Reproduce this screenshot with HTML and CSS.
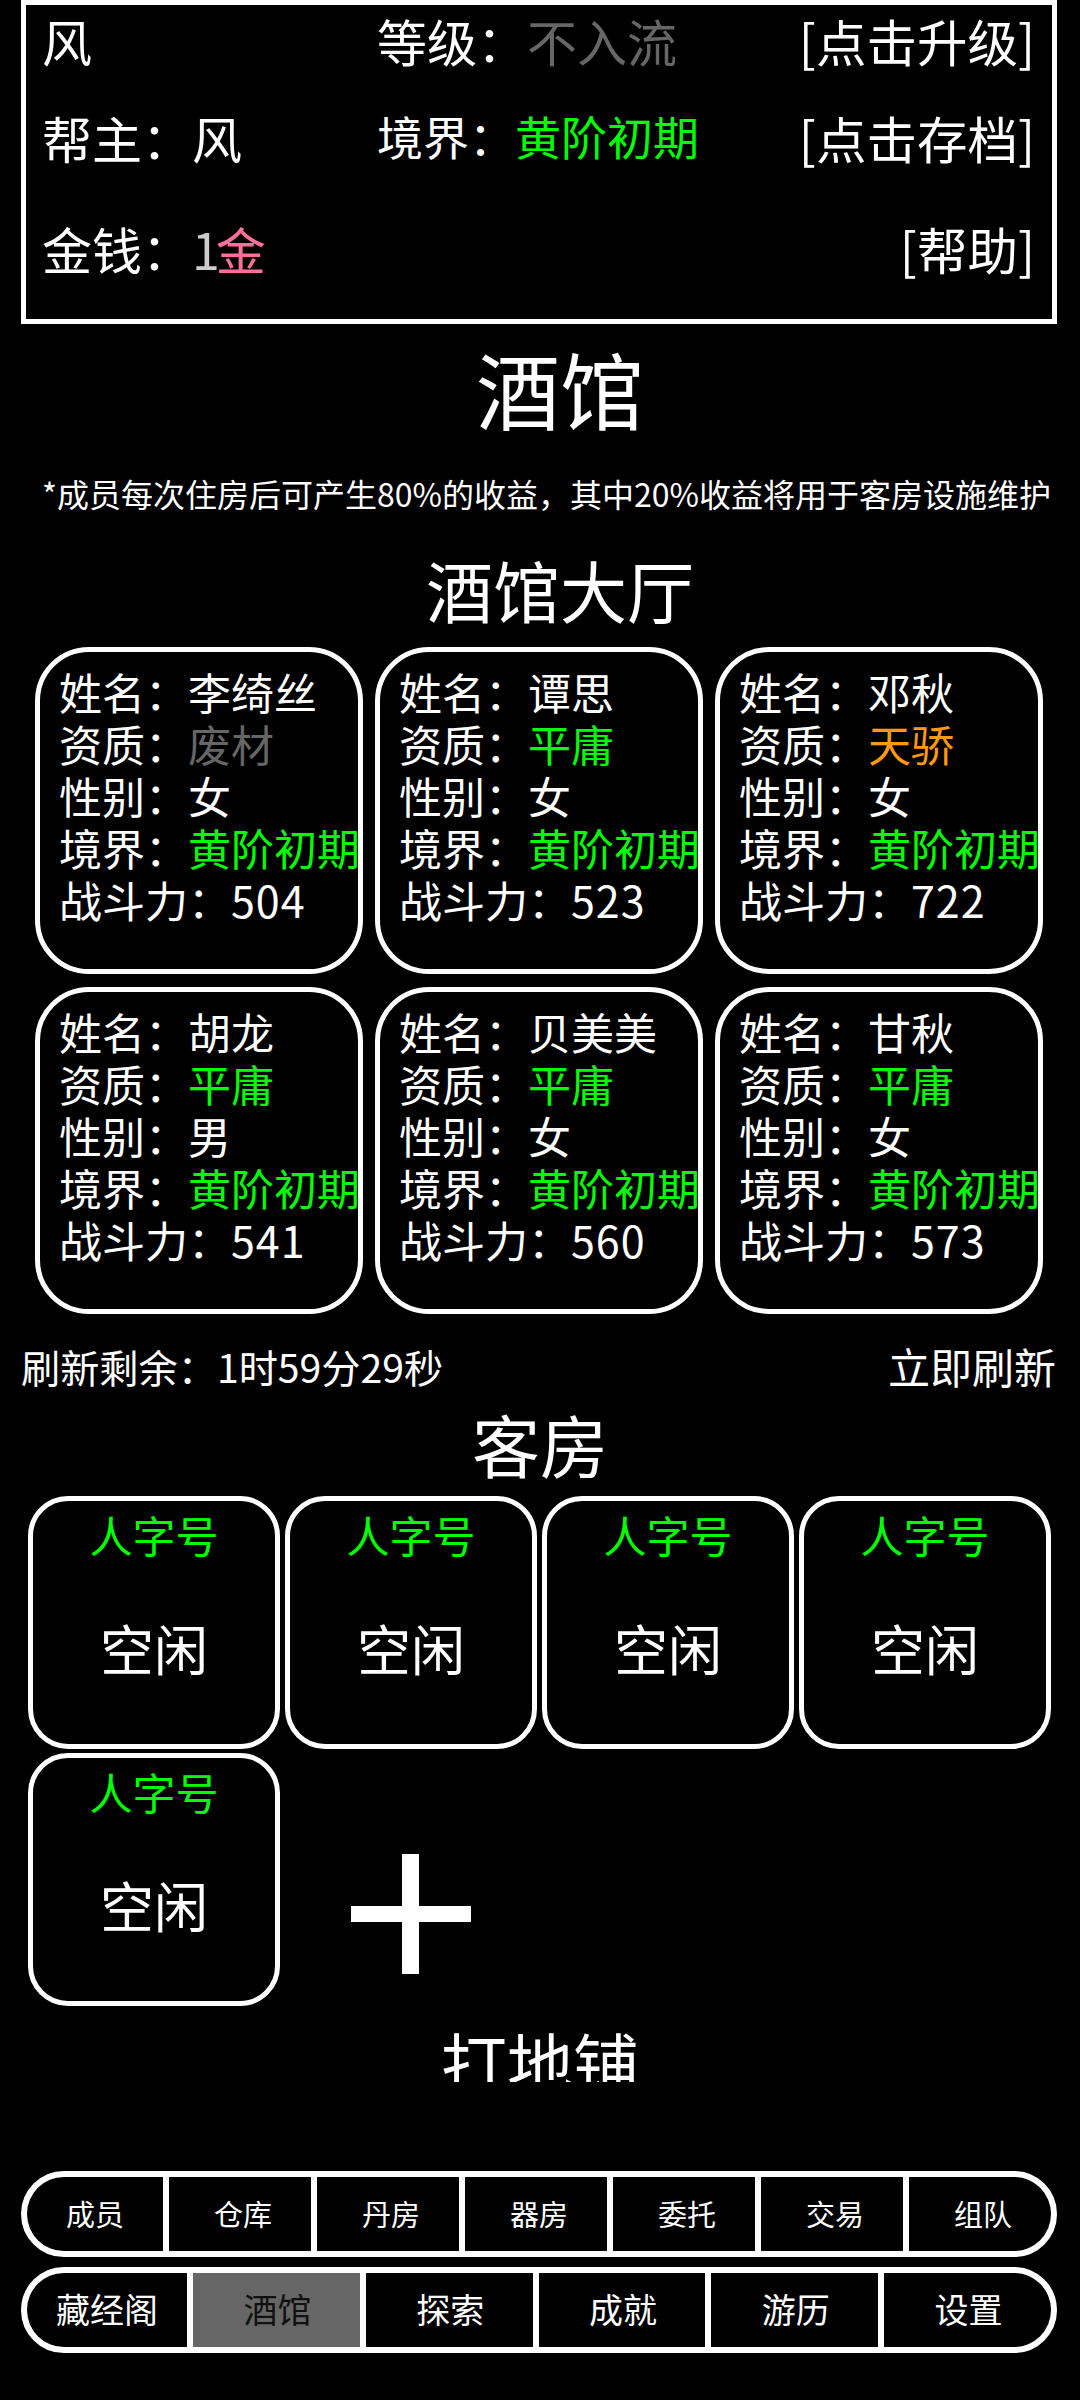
FILE: index.html
```html
<!DOCTYPE html>
<html lang="zh-CN">
<head>
<meta charset="utf-8">
<title>酒馆</title>
<link rel="stylesheet" href="styles.css">
</head>
<body>
<header class="status">
  <div class="st-item">风</div>
  <div class="st-item">等级：<span class="gray">不入流</span></div>
  <div class="st-item st-link">[点击升级]</div>
  <div class="st-item st-low">帮主：风</div>
  <div class="st-item st-realm">境界：<span class="green">黄阶初期</span></div>
  <div class="st-item st-link st-low">[点击存档]</div>
  <div class="st-item">金钱：<span class="silver">1</span><span class="pink">金</span></div>
  <div class="st-item"></div>
  <div class="st-item st-link">[帮助]</div>
</header>

<h1 class="page-title">酒馆</h1>
<p class="note">*成员每次住房后可产生80%的收益，其中20%收益将用于客房设施维护</p>
<h2 class="hall-title">酒馆大厅</h2>

<section class="cards">
  <article class="card">
    <div>姓名：李绮丝</div>
    <div>资质：<span class="gray">废材</span></div>
    <div>性别：女</div>
    <div>境界：<span class="green">黄阶初期</span></div>
    <div>战斗力：<span class="num">504</span></div>
  </article>
  <article class="card">
    <div>姓名：谭思</div>
    <div>资质：<span class="green">平庸</span></div>
    <div>性别：女</div>
    <div>境界：<span class="green">黄阶初期</span></div>
    <div>战斗力：<span class="num">523</span></div>
  </article>
  <article class="card">
    <div>姓名：邓秋</div>
    <div>资质：<span class="orange">天骄</span></div>
    <div>性别：女</div>
    <div>境界：<span class="green">黄阶初期</span></div>
    <div>战斗力：<span class="num">722</span></div>
  </article>
  <article class="card">
    <div>姓名：胡龙</div>
    <div>资质：<span class="green">平庸</span></div>
    <div>性别：男</div>
    <div>境界：<span class="green">黄阶初期</span></div>
    <div>战斗力：<span class="num">541</span></div>
  </article>
  <article class="card">
    <div>姓名：贝美美</div>
    <div>资质：<span class="green">平庸</span></div>
    <div>性别：女</div>
    <div>境界：<span class="green">黄阶初期</span></div>
    <div>战斗力：<span class="num">560</span></div>
  </article>
  <article class="card">
    <div>姓名：甘秋</div>
    <div>资质：<span class="green">平庸</span></div>
    <div>性别：女</div>
    <div>境界：<span class="green">黄阶初期</span></div>
    <div>战斗力：<span class="num">573</span></div>
  </article>
</section>

<div class="refresh">
  <span class="refresh-time">刷新剩余：1时59分29秒</span>
  <span class="refresh-now">立即刷新</span>
</div>

<h2 class="rooms-title">客房</h2>
<section class="rooms">
  <div class="room"><div class="room-name">人字号</div><div class="room-state">空闲</div></div>
  <div class="room"><div class="room-name">人字号</div><div class="room-state">空闲</div></div>
  <div class="room"><div class="room-name">人字号</div><div class="room-state">空闲</div></div>
  <div class="room"><div class="room-name">人字号</div><div class="room-state">空闲</div></div>
  <div class="room"><div class="room-name">人字号</div><div class="room-state">空闲</div></div>
  <div class="room-add">
    <svg class="plus" width="120" height="120" viewBox="0 0 120 120" aria-hidden="true">
      <path fill="#fff" d="M51 0h17v52h52v16H68v52H51V68H0V52h51z"/>
    </svg>
  </div>
</section>
<div class="floor">打地铺</div>

<nav class="nav nav-seven">
  <div class="nav-cell">成员</div>
  <div class="nav-cell">仓库</div>
  <div class="nav-cell">丹房</div>
  <div class="nav-cell">器房</div>
  <div class="nav-cell">委托</div>
  <div class="nav-cell">交易</div>
  <div class="nav-cell">组队</div>
</nav>
<nav class="nav nav-six">
  <div class="nav-cell">藏经阁</div>
  <div class="nav-cell nav-active">酒馆</div>
  <div class="nav-cell">探索</div>
  <div class="nav-cell">成就</div>
  <div class="nav-cell">游历</div>
  <div class="nav-cell">设置</div>
</nav>
</body>
</html>
```

FILE: styles.css
```css
* { box-sizing: border-box; }
html, body { margin: 0; padding: 0; }
body {
  width: 1080px;
  height: 2400px;
  overflow: hidden;
  background: #000;
  color: #fff;
  font-family: "Noto Sans CJK SC", "Noto Sans", sans-serif;
  font-weight: 400;
}
h1, h2, p { margin: 0; font-weight: 400; text-align: center; }

.green { color: #0f0; }
.gray { color: #666; }
.orange { color: #ff9a0a; }
.pink { color: #ff6f9c; }
.silver { color: #ccc; letter-spacing: -4px; }
.num { letter-spacing: 1px; }

.status {
  width: 1036px;
  height: 324px;
  margin-left: 21px;
  border: 5px solid #fff;
  padding: 0 17px 0 16px;
  display: grid;
  grid-template-columns: 335px 1fr auto;
  grid-template-rows: 70px 122px 102px;
  align-items: center;
  font-size: 50px;
  line-height: 60px;
}
.st-link { justify-self: end; font-size: 50.5px; }
.st-low { margin-top: 2px; }
.st-realm { font-size: 46px; margin-bottom: 2px; }

.page-title {
  margin: 11px 0 0 40px;
  font-size: 84px;
  line-height: 106px;
}
.note {
  margin-top: 30px;
  padding-left: 42px;
  text-align: left;
  font-size: 32px;
  line-height: 44px;
  white-space: nowrap;
}
.hall-title {
  margin: 26px 0 0 40px;
  font-size: 67px;
  line-height: 96px;
}

.cards {
  margin-top: 10px;
  padding-left: 35px;
  display: grid;
  grid-template-columns: repeat(3, 328px);
  grid-auto-rows: 327px;
  gap: 13px 12px;
}
.card {
  border: 5px solid #fff;
  border-radius: 54px;
  padding: 13px 0 0 19px;
  font-size: 43px;
  line-height: 52px;
  white-space: nowrap;
}

.refresh {
  margin-top: 22px;
  padding: 0 24px 0 21px;
  display: flex;
  justify-content: space-between;
  line-height: 60px;
}
.refresh-time { font-size: 39.2px; }
.refresh-now { font-size: 42px; }

.rooms-title {
  margin-top: 0;
  font-size: 68px;
  line-height: 96px;
}
.rooms {
  margin-top: 4px;
  padding-left: 28px;
  display: grid;
  grid-template-columns: repeat(4, 252px);
  grid-auto-rows: 253px;
  gap: 4px 5px;
}
.room {
  border: 5px solid #fff;
  border-radius: 40px;
  text-align: center;
}
.room-name {
  margin-top: 7px;
  color: #0f0;
  font-size: 43px;
  line-height: 52px;
}
.room-state {
  margin-top: 54px;
  font-size: 54px;
  line-height: 68px;
}
.room-add {
  display: flex;
  justify-content: center;
  align-items: center;
  padding-top: 68px;
}
.plus { display: block; }

.floor {
  margin-top: 6px;
  height: 70px;
  overflow: hidden;
  text-align: center;
  font-size: 66px;
  line-height: 96px;
}

.nav {
  width: 1036px;
  height: 86px;
  margin-left: 21px;
  border: 6px solid #fff;
  border-radius: 43px;
  overflow: hidden;
  background: #fff;
  display: grid;
  column-gap: 6px;
}
.nav-seven {
  margin-top: 89px;
  grid-template-columns: 136px repeat(6, 142px);
  font-size: 29px;
}
.nav-six {
  margin-top: 10px;
  grid-template-columns: 160px repeat(5, 1fr);
  font-size: 34px;
}
.nav-cell {
  background: #000;
  display: flex;
  justify-content: center;
  align-items: center;
  padding-bottom: 3px;
}
.nav-seven .nav-cell + .nav-cell { padding-left: 6px; }
.nav-six .nav-cell + .nav-cell { padding-left: 2px; }
.nav-cell.nav-active { background: #666; color: #111; }
```
